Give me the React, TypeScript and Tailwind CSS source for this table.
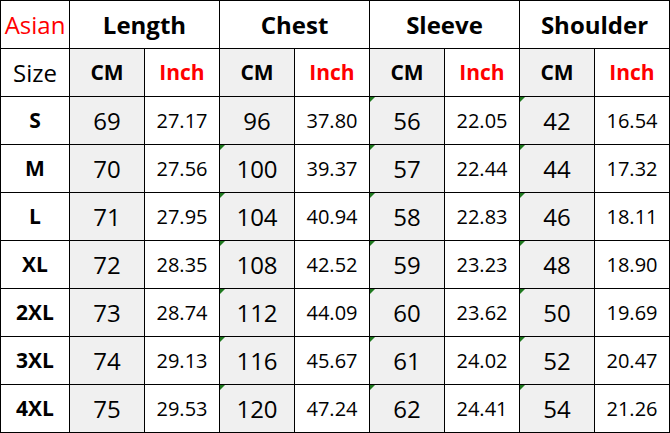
const rows: { size: string; vals: string[]; flags: boolean[] }[] = [
  { size: 'S', vals: ['69', '27.17', '96', '37.80', '56', '22.05', '42', '16.54'], flags: [false, false, true, true] },
  { size: 'M', vals: ['70', '27.56', '100', '39.37', '57', '22.44', '44', '17.32'], flags: [false, true, true, true] },
  { size: 'L', vals: ['71', '27.95', '104', '40.94', '58', '22.83', '46', '18.11'], flags: [false, true, true, true] },
  { size: 'XL', vals: ['72', '28.35', '108', '42.52', '59', '23.23', '48', '18.90'], flags: [false, true, true, true] },
  { size: '2XL', vals: ['73', '28.74', '112', '44.09', '60', '23.62', '50', '19.69'], flags: [false, true, true, true] },
  { size: '3XL', vals: ['74', '29.13', '116', '45.67', '61', '24.02', '52', '20.47'], flags: [false, true, true, true] },
  { size: '4XL', vals: ['75', '29.53', '120', '47.24', '62', '24.41', '54', '21.26'], flags: [false, true, true, true] },
];

const groups = ['Length', 'Chest', 'Sleeve', 'Shoulder'];

const cell = 'h-[48px] flex items-center justify-center border-r border-b border-black';

export default function App() {
  return (
    <div className="w-[670px] h-[433px] bg-white" style={{ fontFamily: '"Open Sans", "Noto Sans", sans-serif' }}>
      <div className="grid grid-cols-[69px_repeat(8,75px)] border-l border-t border-black text-black">
        <div className={`${cell} text-[24px] text-[#ff0000]`}>Asian</div>
        {groups.map((g) => (
          <div key={g} className={`${cell} col-span-2 text-[24px] font-bold`}>
            {g}
          </div>
        ))}

        <div className={`${cell} text-[24px]`}>Size</div>
        {groups.map((g) => (
          <div key={g} className="contents">
            <div className={`${cell} bg-[#f0f0f0] text-[21px] font-bold`}>CM</div>
            <div className={`${cell} text-[21px] font-bold text-[#ff0000]`}>Inch</div>
          </div>
        ))}

        {rows.map((r) => (
          <div key={r.size} className="contents">
            <div className={`${cell} text-[21px] font-bold`}>{r.size}</div>
            {r.vals.map((v, i) => {
              const cm = i % 2 === 0;
              const flag = cm && r.flags[i / 2];
              return (
                <div
                  key={i}
                  className={`${cell} relative ${cm ? 'bg-[#f0f0f0] text-[24px]' : 'text-[20px]'}`}
                >
                  {flag && (
                    <span className="absolute left-0 top-0 w-0 h-0 border-t-[5px] border-r-[5px] border-t-[#1f7a1f] border-r-transparent" />
                  )}
                  {v}
                </div>
              );
            })}
          </div>
        ))}
      </div>
    </div>
  );
}
